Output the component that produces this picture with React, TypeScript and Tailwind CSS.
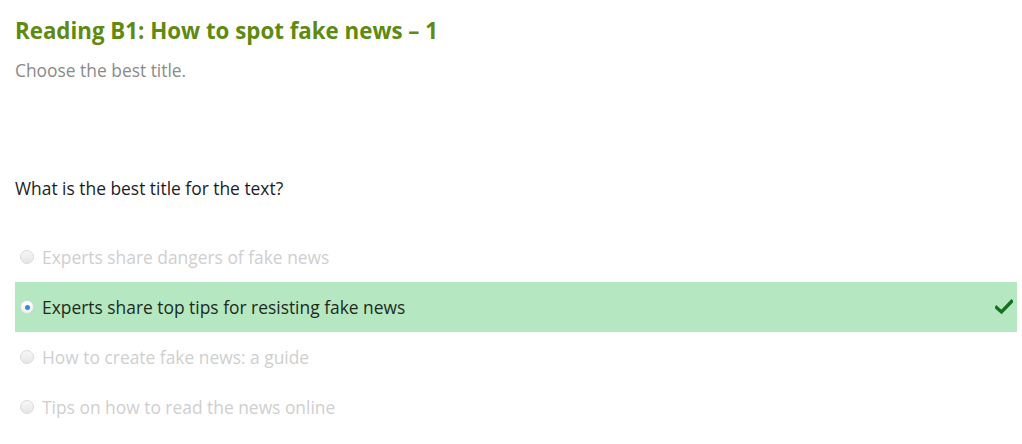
import React from "react";

const options = [
  { text: "Experts share dangers of fake news", correct: false },
  { text: "Experts share top tips for resisting fake news", correct: true },
  { text: "How to create fake news: a guide", correct: false },
  { text: "Tips on how to read the news online", correct: false },
];

export default function App() {
  return (
    <div
      className="w-[1022px] h-[444px] bg-white pl-[15px] pr-[5px] pt-[16px]"
      style={{ fontFamily: '"Open Sans", sans-serif' }}
    >
      <h1 className="text-[22.3px] leading-[30px] font-bold text-[#5e8a10]">
        Reading B1: How to spot fake news – 1
      </h1>
      <p className="mt-[12px] text-[17.4px] leading-[24px] text-[#8a8a8a]">
        Choose the best title.
      </p>
      <p className="mt-[94px] text-[17.4px] leading-[24px] text-[#1c1c28]">
        What is the best title for the text?
      </p>
      <div className="mt-[32px] flex flex-col">
        {options.map((o) => (
          <div
            key={o.text}
            className={`h-[50px] flex items-center pl-[5px] pr-[4px] ${
              o.correct ? "bg-[#b5e8c0]" : ""
            }`}
          >
            <span
              className={`w-[14px] h-[14px] rounded-full border flex items-center justify-center bg-gradient-to-b ${
                o.correct
                  ? "border-[#cfdcd2] from-[#ffffff] to-[#eef2ef]"
                  : "border-[#dadada] from-[#f7f7f7] to-[#e6e6e6]"
              }`}
            >
              {o.correct && (
                <span className="w-[5px] h-[5px] rounded-full bg-[#3b86d8]" />
              )}
            </span>
            <span
              className={`ml-[8px] text-[17.4px] leading-[24px] ${
                o.correct ? "text-[#1e2a1e]" : "text-[#cfcfcf]"
              }`}
            >
              {o.text}
            </span>
            {o.correct && (
              <svg
                className="ml-auto"
                width="18"
                height="16"
                viewBox="0 0 18 16"
              >
                <path
                  d="M1.5 8.5 L6.5 13 L16.5 2.5"
                  fill="none"
                  stroke="#17701f"
                  strokeWidth="3.4"
                  strokeLinecap="square"
                />
              </svg>
            )}
          </div>
        ))}
      </div>
    </div>
  );
}
